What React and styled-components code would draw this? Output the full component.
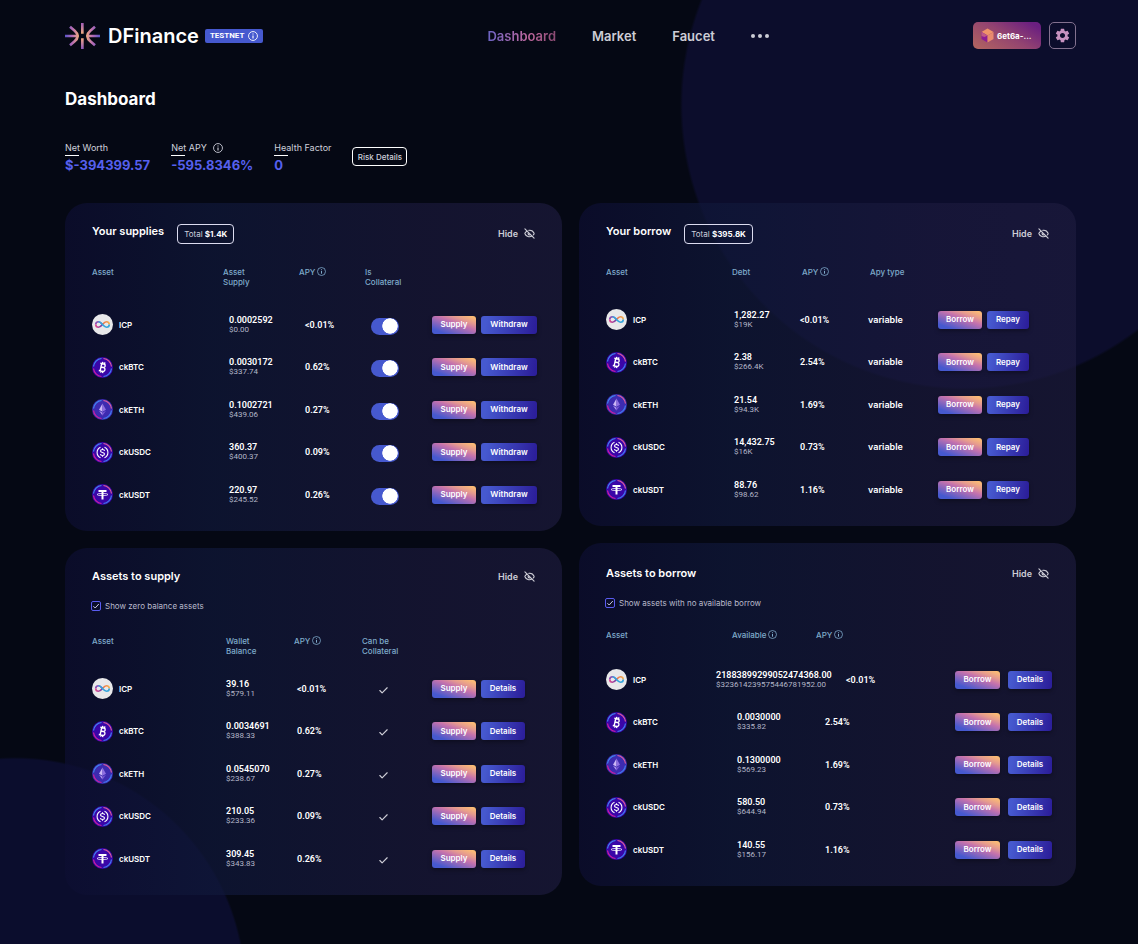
import React from 'react';
import styled, { createGlobalStyle, css } from 'styled-components';
import { EyeOff, Check } from 'lucide-react';
import { MdSettings } from 'react-icons/md';

const GlobalStyle = createGlobalStyle`
  * { box-sizing: border-box; }
  body {
    margin: 0;
    background: #050814;
    font-family: Inter, "Liberation Sans", sans-serif;
    color: #fff;
  }
  button { font-family: inherit; cursor: pointer; }
`;

const Page = styled.div`
  min-height: 100vh;
  padding: 22px 62px 48px 65px;
  background:
    radial-gradient(circle 285px at calc(100% - 173px) 105px, #0c0d2c 99%, transparent 100%),
    radial-gradient(circle 231px at 15px calc(100% + 44px), #0b0d2d 99%, transparent 100%),
    #050814;
`;

const Header = styled.header`
  display: flex;
  align-items: center;
  height: 27px;
`;

const Brand = styled.a`
  display: flex;
  align-items: center;
  color: #fff;
  text-decoration: none;
  font-size: 20px;
  font-weight: 600;
  line-height: 24px;
  svg { flex: none; }
`;

const BrandName = styled.span`
  margin: 0 6px 0 8px;
`;

const Badge = styled.span`
  display: flex;
  align-items: center;
  gap: 4px;
  height: 14px;
  padding: 0 5px;
  border-radius: 2px;
  background: #4659cf;
  font-family: Roboto, "Liberation Sans", sans-serif;
  font-size: 8px;
  font-weight: 700;
  line-height: 14px;
`;

const Nav = styled.nav`
  display: flex;
  align-items: center;
  gap: 36px;
  margin: 0 auto;
  padding-left: 20px;
`;

const NavLink = styled.a`
  color: #cdcdd6;
  font-size: 13px;
  font-weight: 600;
  line-height: 18px;
  text-decoration: none;
  ${(p) => p.$active && css`
    color: transparent;
    background: linear-gradient(90deg, #6a63c4, #c0699f 60%, #8a4a72);
    background-clip: text;
  `}
`;

const MoreButton = styled.button`
  display: flex;
  gap: 3px;
  padding: 0;
  border: 0;
  background: none;
`;

const Dot = styled.span`
  width: 4px;
  height: 4px;
  border-radius: 50%;
  background: #cdcdd6;
`;

const Actions = styled.div`
  display: flex;
  gap: 8px;
`;

const WalletButton = styled.button`
  display: flex;
  align-items: center;
  gap: 3px;
  width: 68px;
  height: 27px;
  padding: 0 8px;
  border: 0;
  border-radius: 5px;
  background: linear-gradient(30deg, #b4665f 0%, #934470 50%, #6b1f80 90%);
  color: #fff;
  font-size: 8px;
  font-weight: 700;
  line-height: 12px;
  white-space: nowrap;
  svg { flex: none; }
`;

const SettingsButton = styled.button`
  display: flex;
  align-items: center;
  justify-content: center;
  width: 27px;
  height: 27px;
  padding: 0;
  border: 1px solid #83718f;
  border-radius: 5px;
  background: none;
  color: #c792c0;
`;

const Title = styled.h1`
  margin: 38px 0 0;
  font-size: 17px;
  font-weight: 700;
  line-height: 24px;
`;

const Stats = styled.section`
  display: flex;
  gap: 21px;
  margin-top: 30px;
  height: 62px;
`;

const Stat = styled.div`
  min-width: 57px;
`;

const StatLabel = styled.div`
  display: flex;
  align-items: center;
  gap: 6px;
  height: 14px;
  color: #cfd0dc;
  font-size: 9px;
  line-height: 14px;
`;

const Underline = styled.div`
  width: 14px;
  height: 1px;
  background: #fff;
`;

const StatValue = styled.div`
  color: #5660ee;
  font-size: 13px;
  font-weight: 700;
  line-height: 18px;
`;

const RiskButton = styled.button`
  align-self: flex-start;
  width: 55px;
  height: 19px;
  margin-top: 6px;
  padding: 0;
  border: 1px solid #fff;
  border-radius: 4px;
  background: none;
  color: #cfd0dc;
  font-size: 8px;
  font-weight: 500;
  white-space: nowrap;
`;

const Columns = styled.main`
  display: grid;
  grid-template-columns: 1fr 1fr;
  align-items: start;
  gap: 17px;
`;

const Column = styled.div`
  display: flex;
  flex-direction: column;
  gap: 17px;
`;

const Card = styled.section`
  padding: ${(p) => p.$top || 20}px 24px 15px 27px;
  border-radius: 22px;
  background: linear-gradient(90deg, rgba(13, 14, 50, 0.7) 0%, rgba(16, 24, 58, 0.7) 30%, rgba(28, 26, 62, 0.64) 72%, rgba(29, 27, 62, 0.68) 100%);
`;

const CardHead = styled.div`
  display: flex;
  align-items: center;
  height: ${(p) => (p.$tall ? 21 : 17)}px;
  padding-right: 3px;
`;

const CardTitle = styled.h2`
  align-self: flex-start;
  margin: 0;
  font-size: 11px;
  font-weight: 600;
  line-height: 16px;
`;

const Total = styled.span`
  margin-left: 13px;
  padding: 0 6px;
  border: 1px solid #dcdcf0;
  border-radius: 4px;
  color: #cfd0dc;
  font-size: 8px;
  line-height: 18px;
  b { color: #fff; font-weight: 700; }
`;

const HideButton = styled.button`
  display: flex;
  align-items: center;
  gap: 6px;
  margin-left: auto;
  padding: 0;
  border: 0;
  background: none;
  color: #cdcdd6;
  font-size: 9px;
  font-weight: 600;
  line-height: 14px;
`;

const Filter = styled.label`
  display: flex;
  align-items: center;
  gap: 4px;
  height: 14px;
  margin-top: 14px;
  margin-left: -1px;
  color: #b9bacb;
  font-size: 8px;
  line-height: 14px;
`;

const FilterBox = styled.input`
  appearance: none;
  width: 10px;
  height: 10px;
  margin: 0;
  border: 1px solid #5a5cf0;
  border-radius: 2px;
  background: url("data:image/svg+xml,%3Csvg xmlns='http://www.w3.org/2000/svg' viewBox='0 0 8 8'%3E%3Cpath d='M1.4 4.2 3.2 6 6.8 2' fill='none' stroke='%23c8c8e0'/%3E%3C/svg%3E") center / 8px no-repeat;
`;

const Table = styled.table`
  width: 100%;
  margin-top: ${(p) => p.$top}px;
  border-collapse: collapse;
  table-layout: fixed;
`;

const Th = styled.th`
  height: ${(p) => p.$height}px;
  padding: 0 0 0 ${(p) => p.$pad || 0}px;
  color: #7fabcb;
  font-size: 8px;
  font-weight: 500;
  line-height: 10px;
  text-align: left;
  vertical-align: top;
  white-space: pre-line;
  width: ${(p) => (p.$width ? `${p.$width}px` : 'auto')};
  svg { margin-left: 2px; vertical-align: top; }
`;

const Row = styled.tr`
  height: 43px;
  &:nth-child(even) { height: 42px; }
`;

const Td = styled.td`
  padding: 0 0 0 ${(p) => p.$pad || 0}px;
  font-size: 8px;
  font-weight: 600;
  line-height: 12px;
  vertical-align: middle;
  white-space: nowrap;
`;

const Asset = styled.div`
  display: flex;
  align-items: center;
  gap: 6px;
`;

const Amount = styled.div`
  font-family: Roboto, "Liberation Sans", sans-serif;
  font-size: 9px;
  font-weight: 600;
  line-height: 10px;
`;

const Worth = styled(Amount)`
  color: #b4b6c8;
  font-size: 8px;
  font-weight: 400;
`;

const Kind = styled.span`
  font-size: 9px;
`;

const Switch = styled.input`
  appearance: none;
  display: block;
  width: 28px;
  height: 17px;
  margin: 3px 0 0;
  border-radius: 9px;
  background: radial-gradient(circle 8px at 19px 8px, #fff 92%, transparent 100%), #4659cf;
`;

const Tick = styled(Check)`
  display: block;
  margin-top: 3px;
  color: #cdcdd6;
`;

const Buttons = styled.div`
  display: flex;
  gap: ${(p) => p.$gap}px;
`;

const Action = styled.button`
  flex: none;
  height: 18px;
  padding: 0 0 1px;
  width: ${(p) => p.$width}px;
  border: 0;
  border-radius: 3px;
  color: #fff;
  font-size: 8px;
  font-weight: 600;
  line-height: 16px;
  box-shadow: 0 2px 4px rgba(0, 0, 0, 0.35);
  background: ${(p) => (p.$warm
    ? 'linear-gradient(20deg, #4659cf 15%, #c572ad 58%, #e59a8f 75%, #fcbd74 95%)'
    : 'linear-gradient(100deg, #4659cf 10%, #2c1f9b 95%)')};
`;

const Info = ({ size = 9 }) => (
  <svg width={size} height={size} viewBox="0 0 18 18" fill="none" stroke="currentColor" strokeWidth="1.6" aria-hidden="true">
    <circle cx="9" cy="9" r="8" />
    <path d="M9 8v5.4M9 4.6v1.8" strokeWidth="2" />
  </svg>
);

const Logo = () => (
  <svg width="35" height="26" viewBox="0 0 105 78" fill="none" strokeWidth="8" aria-hidden="true">
    <defs>
      <linearGradient id="rayLeft" gradientUnits="userSpaceOnUse" x1="0" y1="0" x2="44" y2="0">
        <stop offset="0" stopColor="#5b55c9" />
        <stop offset="0.5" stopColor="#b56bb5" />
        <stop offset="1" stopColor="#f6b27a" />
      </linearGradient>
      <linearGradient id="rayRight" gradientUnits="userSpaceOnUse" x1="105" y1="0" x2="61" y2="0">
        <stop offset="0" stopColor="#5b55c9" />
        <stop offset="0.5" stopColor="#b56bb5" />
        <stop offset="1" stopColor="#f6b27a" />
      </linearGradient>
      <linearGradient id="rayUp" gradientUnits="userSpaceOnUse" x1="0" y1="0" x2="0" y2="78">
        <stop offset="0" stopColor="#a05cb8" />
        <stop offset="0.45" stopColor="#f6b27a" />
        <stop offset="0.6" stopColor="#f0a583" />
        <stop offset="1" stopColor="#8c58bd" />
      </linearGradient>
    </defs>
    <path d="M0 39H41M15 11 29 23Q37 30 38 39Q37 48 29 55L15 67" stroke="url(#rayLeft)" />
    <path d="M105 39H64M90 11 76 23Q68 30 67 39Q68 48 76 55L90 67" stroke="url(#rayRight)" />
    <path d="M52 0V32M52.100 46V78" stroke="url(#rayUp)" />
  </svg>
);

const Cube = () => (
  <svg width="13" height="15" viewBox="0 0 26 30" aria-hidden="true">
    <path d="M13 1 25 8 13 15 1 8Z" fill="#f0936a" />
    <path d="M1 8 13 15V29L1 22Z" fill="#8d1d94" />
    <path d="M25 8 13 15V29L25 22Z" fill="#e98a6e" />
    <path d="M1 8 13 15 7 18 1 16Z" fill="#c05a86" />
  </svg>
);

const glyphs = {
  ckBTC: (
    <g transform="rotate(12 21 21)" fill="none" stroke="#fff" strokeWidth="2.800">
      <path d="M15 13.500H22.500A3.700 3.700 0 0 1 22.500 20.800H17.500M17.500 20.800H23.500A3.900 3.900 0 0 1 23.500 28.500H15M17.800 13.500V28.500M19.500 10V13M23.500 10V13M19.500 29V32M23.500 29V32" />
    </g>
  ),
  ckETH: (
    <g>
      <path d="M21 9 14 21.500 21 25.500Z" fill="#cdb8f5" />
      <path d="M21 9 28 21.500 21 25.500Z" fill="#8f6fe0" />
      <path d="M14 23.500 21 33V27.500Z" fill="#b79cf0" />
      <path d="M28 23.500 21 33V27.500Z" fill="#7b58d4" />
    </g>
  ),
  ckUSDC: (
    <g fill="none" stroke="#fff" strokeWidth="2.200">
      <path d="M17 10.500A11.500 11.500 0 0 0 17 31.500M25 10.500A11.500 11.500 0 0 1 25 31.500" />
      <path d="M25 18C25 15.500 23 15 21 15S17 16 17 18.200C17 22 25 20 25 24C25 26 23 27 21 27S17 26.200 17 24M21 12.500V15M21 27V29.500" />
    </g>
  ),
  ckUSDT: (
    <g fill="none" stroke="#fff">
      <path d="M13 14H29" strokeWidth="4" />
      <path d="M21 14V31" strokeWidth="4" />
      <ellipse cx="21" cy="21" rx="11" ry="2.200" strokeWidth="1.500" />
    </g>
  ),
};

const Token = ({ name }) => {
  if (name === 'ICP') {
    return (
      <svg width="21" height="21" viewBox="0 0 42 42" fill="none" strokeWidth="3.400" aria-hidden="true">
        <defs>
          <linearGradient id="loopWarm" x1="0" x2="1">
            <stop offset="0" stopColor="#e0478e" />
            <stop offset="1" stopColor="#6a3fa8" />
          </linearGradient>
          <linearGradient id="loopSun" x1="0" x2="1">
            <stop offset="0" stopColor="#e8684a" />
            <stop offset="1" stopColor="#f4b050" />
          </linearGradient>
        </defs>
        <circle cx="21" cy="21" r="21" fill="#e8e8ea" />
        <path d="M21 21C18 17.500 16 15.500 13 15.500A5.500 5.500 0 0 0 7.500 21" stroke="#8a4fb5" />
        <path d="M7.500 21A5.500 5.500 0 0 0 13 26.500C16 26.500 18 24.500 21 21" stroke="url(#loopWarm)" />
        <path d="M21 21C24 17.500 26 15.500 29 15.500A5.500 5.500 0 0 1 34.500 21" stroke="url(#loopSun)" />
        <path d="M34.500 21A5.500 5.500 0 0 1 29 26.500C26 26.500 24 24.500 21 21C18.500 18 16.500 15.500 13 15.500" stroke="#35a5dc" />
      </svg>
    );
  }
  return (
    <svg width="21" height="21" viewBox="0 0 42 42" aria-hidden="true">
      <circle cx="21" cy="21" r="21" fill={name === 'ckETH' ? '#3d2bb0' : '#3a06a8'} />
      <g fill="none" strokeWidth="2.400">
        <path d="M19 3A18 18 0 0 0 3 19" stroke="#3f8df0" />
        <path d="M23 3A18 18 0 0 1 39 19" stroke="#e0609a" />
        <path d="M39 23A18 18 0 0 1 23 39" stroke="#3f7df0" />
        <path d="M3 23A18 18 0 0 0 19 39" stroke="#d01fa0" />
      </g>
      {glyphs[name]}
    </svg>
  );
};

const names = ['ICP', 'ckBTC', 'ckETH', 'ckUSDC', 'ckUSDT'];
const apys = ['<0.01%', '2.54%', '1.69%', '0.73%', '1.16%'];
const supplyApys = ['<0.01%', '0.62%', '0.27%', '0.09%', '0.26%'];

const cards = {
  supplies: {
    title: 'Your supplies',
    total: '$1.4K',
    tableTop: 23,
    headHeight: 36,
    heads: [
      { text: 'Asset' },
      { text: 'Asset\nSupply', width: 76 },
      { text: 'APY', width: 66, info: true },
      { text: 'Is\nCollateral', width: 67 },
      { text: '', width: 106 },
    ],
    amounts: [['0.0002592', '$0.00'], ['0.0030172', '$337.74'], ['0.1002721', '$439.06'], ['360.37', '$400.37'], ['220.97', '$245.52']],
    apys: supplyApys,
    pads: [6, 6, 6],
    extra: 'switch',
    actions: [['Supply', 44], ['Withdraw', 56]],
    gap: 5,
  },
  borrows: {
    title: 'Your borrow',
    total: '$395.8K',
    tableTop: 23,
    headHeight: 31,
    heads: [
      { text: 'Asset' },
      { text: 'Debt', width: 68 },
      { text: 'APY', width: 68, info: true, pad: 2 },
      { text: 'Apy type', width: 70, pad: 2 },
      { text: '', width: 114 },
    ],
    amounts: [['1,282.27', '$19K'], ['2.38', '$266.4K'], ['21.54', '$94.3K'], ['14,432.75', '$16K'], ['88.76', '$98.62']],
    apys,
    pads: [2, 0, 0],
    extra: 'variable',
    actions: [['Borrow', 44], ['Repay', 42]],
    gap: 5,
  },
  toSupply: {
    title: 'Assets to supply',
    filter: 'Show zero balance assets',
    tableTop: 23,
    headHeight: 31,
    heads: [
      { text: 'Asset' },
      { text: 'Wallet\nBalance', width: 68 },
      { text: 'APY', width: 68, info: true },
      { text: 'Can be\nCollateral', width: 70 },
      { text: '', width: 106 },
    ],
    amounts: [['39.16', '$579.11'], ['0.0034691', '$388.33'], ['0.0545070', '$238.67'], ['210.05', '$233.36'], ['309.45', '$343.83']],
    apys: supplyApys,
    pads: [0, 3, 16],
    extra: 'check',
    actions: [['Supply', 44], ['Details', 44]],
    gap: 5,
  },
  toBorrow: {
    title: 'Assets to borrow',
    filter: 'Show assets with no available borrow',
    top: 22,
    tableTop: 20,
    headHeight: 28,
    heads: [
      { text: 'Asset' },
      { text: 'Available', width: 100, info: true, pad: 16 },
      { text: 'APY', width: 139, info: true },
      { text: '', width: 97 },
    ],
    amounts: [['21883899299052474368.00', '$323614239575446781952.00'], ['0.0030000', '$335.82'], ['0.1300000', '$569.23'], ['580.50', '$644.94'], ['140.55', '$156.17']],
    apys,
    pads: [21, 9],
    widePads: [0, 30],
    actions: [['Borrow', 45], ['Details', 44]],
    gap: 8,
  },
};

const Extra = ({ kind, name }) => {
  if (kind === 'switch') return <Switch type="checkbox" role="switch" defaultChecked aria-label={`${name} is collateral`} />;
  if (kind === 'check') return <Tick size={11} strokeWidth={2.5} aria-label="Yes" />;
  return <Kind>{kind}</Kind>;
};

const Panel = ({ data }) => (
  <Card $top={data.top}>
    <CardHead $tall={Boolean(data.total)}>
      <CardTitle>{data.title}</CardTitle>
      {data.total && <Total>Total <b>{data.total}</b></Total>}
      <HideButton type="button">Hide <EyeOff size={11} strokeWidth={2.5} /></HideButton>
    </CardHead>
    {data.filter && (
      <Filter>
        <FilterBox type="checkbox" defaultChecked />
        {data.filter}
      </Filter>
    )}
    <Table $top={data.tableTop}>
      <thead>
        <tr>
          {data.heads.map((h, i) => (
            <Th key={i} scope="col" $width={h.width} $pad={h.pad} $height={data.headHeight}>
              {h.text}{h.info && <Info />}
            </Th>
          ))}
        </tr>
      </thead>
      <tbody>
        {names.map((name, i) => {
          const pads = (i === 0 && data.widePads) || data.pads;
          return (
            <Row key={name}>
              <Td><Asset><Token name={name} />{name}</Asset></Td>
              <Td $pad={pads[0]}>
                <Amount>{data.amounts[i][0]}</Amount>
                <Worth>{data.amounts[i][1]}</Worth>
              </Td>
              <Td $pad={pads[1]}><Amount>{data.apys[i]}</Amount></Td>
              {data.extra && <Td $pad={pads[2]}><Extra kind={data.extra} name={name} /></Td>}
              <Td>
                <Buttons $gap={data.gap}>
                  {data.actions.map(([label, width], k) => (
                    <Action key={label} type="button" $warm={k === 0} $width={width}>{label}</Action>
                  ))}
                </Buttons>
              </Td>
            </Row>
          );
        })}
      </tbody>
    </Table>
  </Card>
);

export default function App() {
  return (
    <Page>
      <GlobalStyle />
      <Header>
        <Brand href="#">
          <Logo />
          <BrandName>DFinance</BrandName>
          <Badge>TESTNET <Info size={10} /></Badge>
        </Brand>
        <Nav>
          <NavLink href="#dashboard" $active>Dashboard</NavLink>
          <NavLink href="#market">Market</NavLink>
          <NavLink href="#faucet">Faucet</NavLink>
          <MoreButton type="button" aria-label="More"><Dot /><Dot /><Dot /></MoreButton>
        </Nav>
        <Actions>
          <WalletButton type="button"><Cube />6et6a-...</WalletButton>
          <SettingsButton type="button" aria-label="Settings"><MdSettings size={17} /></SettingsButton>
        </Actions>
      </Header>
      <Title>Dashboard</Title>
      <Stats>
        <Stat>
          <StatLabel>Net Worth</StatLabel>
          <Underline />
          <StatValue>$-394399.57</StatValue>
        </Stat>
        <Stat>
          <StatLabel>Net APY <Info size={10} /></StatLabel>
          <Underline />
          <StatValue>-595.8346%</StatValue>
        </Stat>
        <Stat>
          <StatLabel>Health Factor</StatLabel>
          <Underline />
          <StatValue>0</StatValue>
        </Stat>
        <RiskButton type="button">Risk Details</RiskButton>
      </Stats>
      <Columns>
        <Column>
          <Panel data={cards.supplies} />
          <Panel data={cards.toSupply} />
        </Column>
        <Column>
          <Panel data={cards.borrows} />
          <Panel data={cards.toBorrow} />
        </Column>
      </Columns>
    </Page>
  );
}
